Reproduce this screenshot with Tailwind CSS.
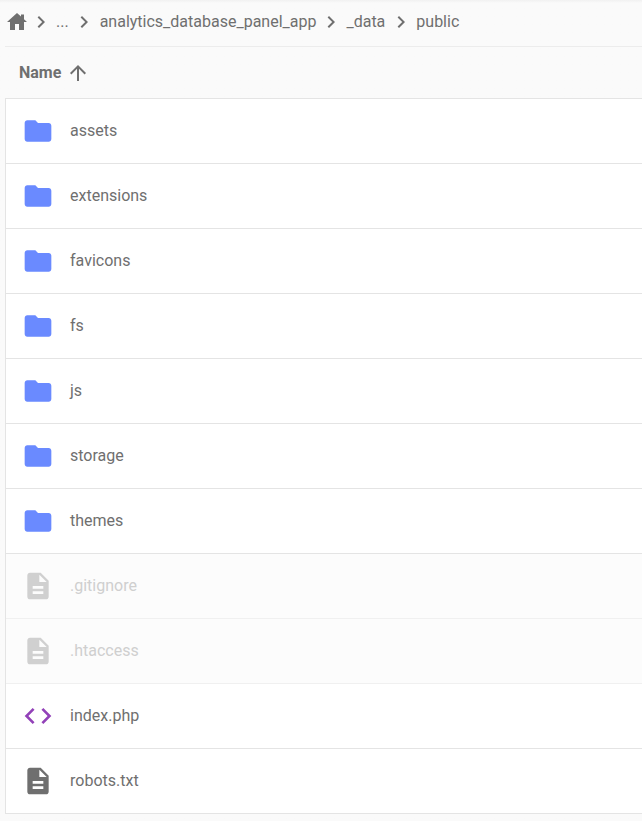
<!DOCTYPE html>
<html lang="en">
<head>
    <meta charset="UTF-8">
    <title>public</title>
    <script src="https://cdn.jsdelivr.net/npm/@tailwindcss/browser@4"></script>
</head>
<body class="bg-[#fafafa] font-['Roboto',sans-serif] text-[#6f6f6f] overflow-hidden">
    <div class="w-[642px] h-[821px] overflow-hidden pl-[5px] bg-gradient-to-b from-[#f1f1f1] to-[#fafafa] to-[3px]">
        <!-- breadcrumb -->
        <nav class="h-[47px] flex items-center pb-[2px] border-b border-[#ececec] text-base whitespace-nowrap">
            <svg class="w-6 h-6 shrink-0" viewBox="0 0 24 24" fill="#6f6f6f"><path d="M10 20v-6h4v6h5v-8h3l-3-2.7V4.500h-3v2L12 3 2 12h3v8z"/></svg>
            <svg class="w-6 h-6 shrink-0" viewBox="0 0 24 24" fill="#6f6f6f"><path d="M10 6 8.600 7.400 13.200 12l-4.600 4.600L10 18l6-6z"/></svg>
            <span class="ml-[3px]">...</span>
            <svg class="w-6 h-6 ml-[3px] shrink-0" viewBox="0 0 24 24" fill="#6f6f6f"><path d="M10 6 8.600 7.400 13.200 12l-4.600 4.600L10 18l6-6z"/></svg>
            <span class="ml-1">analytics_database_panel_app</span>
            <svg class="w-6 h-6 ml-[3px] shrink-0" viewBox="0 0 24 24" fill="#6f6f6f"><path d="M10 6 8.600 7.400 13.200 12l-4.600 4.600L10 18l6-6z"/></svg>
            <span class="ml-[3px]">_data</span>
            <svg class="w-6 h-6 ml-1 shrink-0" viewBox="0 0 24 24" fill="#6f6f6f"><path d="M10 6 8.600 7.400 13.200 12l-4.600 4.600L10 18l6-6z"/></svg>
            <span class="ml-[3px]">public</span>
        </nav>

        <!-- column header -->
        <div class="h-[51px] flex items-center pl-[14px] text-base font-bold">
            <span>Name</span>
            <svg class="w-6 h-6 ml-[5px]" viewBox="0 0 24 24" fill="#6f6f6f"><path d="M4 12l1.410 1.410L11 7.830V20h2V7.830l5.580 5.590L20 12l-8-8-8 8z"/></svg>
        </div>

        <!-- file list -->
        <ul class="border border-r-0 border-[#e4e4e4] bg-white text-base">
            <li class="h-[65px] flex items-center border-b border-[#e4e4e4]">
                <svg class="w-8 h-8 ml-4 shrink-0" viewBox="0 0 24 24" fill="#6a8aff"><path d="M10 4H4c-1.100 0-2 .9-2 2v12c0 1.100.9 2 2 2h16c1.100 0 2-.9 2-2V8c0-1.100-.9-2-2-2h-8z"/></svg>
                <span class="ml-4">assets</span>
            </li>
            <li class="h-[65px] flex items-center border-b border-[#e4e4e4]">
                <svg class="w-8 h-8 ml-4 shrink-0" viewBox="0 0 24 24" fill="#6a8aff"><path d="M10 4H4c-1.100 0-2 .9-2 2v12c0 1.100.9 2 2 2h16c1.100 0 2-.9 2-2V8c0-1.100-.9-2-2-2h-8z"/></svg>
                <span class="ml-4">extensions</span>
            </li>
            <li class="h-[65px] flex items-center border-b border-[#e4e4e4]">
                <svg class="w-8 h-8 ml-4 shrink-0" viewBox="0 0 24 24" fill="#6a8aff"><path d="M10 4H4c-1.100 0-2 .9-2 2v12c0 1.100.9 2 2 2h16c1.100 0 2-.9 2-2V8c0-1.100-.9-2-2-2h-8z"/></svg>
                <span class="ml-4">favicons</span>
            </li>
            <li class="h-[65px] flex items-center border-b border-[#e4e4e4]">
                <svg class="w-8 h-8 ml-4 shrink-0" viewBox="0 0 24 24" fill="#6a8aff"><path d="M10 4H4c-1.100 0-2 .9-2 2v12c0 1.100.9 2 2 2h16c1.100 0 2-.9 2-2V8c0-1.100-.9-2-2-2h-8z"/></svg>
                <span class="ml-4">fs</span>
            </li>
            <li class="h-[65px] flex items-center border-b border-[#e4e4e4]">
                <svg class="w-8 h-8 ml-4 shrink-0" viewBox="0 0 24 24" fill="#6a8aff"><path d="M10 4H4c-1.100 0-2 .9-2 2v12c0 1.100.9 2 2 2h16c1.100 0 2-.9 2-2V8c0-1.100-.9-2-2-2h-8z"/></svg>
                <span class="ml-4">js</span>
            </li>
            <li class="h-[65px] flex items-center border-b border-[#e4e4e4]">
                <svg class="w-8 h-8 ml-4 shrink-0" viewBox="0 0 24 24" fill="#6a8aff"><path d="M10 4H4c-1.100 0-2 .9-2 2v12c0 1.100.9 2 2 2h16c1.100 0 2-.9 2-2V8c0-1.100-.9-2-2-2h-8z"/></svg>
                <span class="ml-4">storage</span>
            </li>
            <li class="h-[65px] flex items-center border-b border-[#e4e4e4]">
                <svg class="w-8 h-8 ml-4 shrink-0" viewBox="0 0 24 24" fill="#6a8aff"><path d="M10 4H4c-1.100 0-2 .9-2 2v12c0 1.100.9 2 2 2h16c1.100 0 2-.9 2-2V8c0-1.100-.9-2-2-2h-8z"/></svg>
                <span class="ml-4">themes</span>
            </li>
            <li class="h-[65px] flex items-center border-b border-[#f0f0f0] bg-[#fcfcfc] text-[#cfcfcf]">
                <svg class="w-8 h-8 ml-4 shrink-0" viewBox="0 0 24 24" fill="#d0d0d0"><path d="M14 2H6c-1.100 0-2 .9-2 2v16c0 1.100.9 2 2 2h12c1.100 0 2-.9 2-2V8l-6-6zm2 16H8v-2h8v2zm0-4H8v-2h8v2zm-3-5V3.500L18.500 9H13z"/></svg>
                <span class="ml-4">.gitignore</span>
            </li>
            <li class="h-[65px] flex items-center border-b border-[#f0f0f0] bg-[#fcfcfc] text-[#cfcfcf]">
                <svg class="w-8 h-8 ml-4 shrink-0" viewBox="0 0 24 24" fill="#d0d0d0"><path d="M14 2H6c-1.100 0-2 .9-2 2v16c0 1.100.9 2 2 2h12c1.100 0 2-.9 2-2V8l-6-6zm2 16H8v-2h8v2zm0-4H8v-2h8v2zm-3-5V3.500L18.500 9H13z"/></svg>
                <span class="ml-4">.htaccess</span>
            </li>
            <li class="h-[65px] flex items-center border-b border-[#e4e4e4]">
                <svg class="w-8 h-8 ml-4 shrink-0" viewBox="0 0 24 24" fill="#9241b8"><path d="M9.400 16.600 4.800 12l4.600-4.600L8 6l-6 6 6 6 1.400-1.400zm5.200 0 4.600-4.600-4.600-4.600L16 6l6 6-6 6-1.400-1.400z"/></svg>
                <span class="ml-4">index.php</span>
            </li>
            <li class="h-[64px] flex items-center">
                <svg class="w-8 h-8 ml-4 shrink-0" viewBox="0 0 24 24" fill="#6f6f6f"><path d="M14 2H6c-1.100 0-2 .9-2 2v16c0 1.100.9 2 2 2h12c1.100 0 2-.9 2-2V8l-6-6zm2 16H8v-2h8v2zm0-4H8v-2h8v2zm-3-5V3.500L18.500 9H13z"/></svg>
                <span class="ml-4">robots.txt</span>
            </li>
        </ul>
    </div>
</body>
</html>
